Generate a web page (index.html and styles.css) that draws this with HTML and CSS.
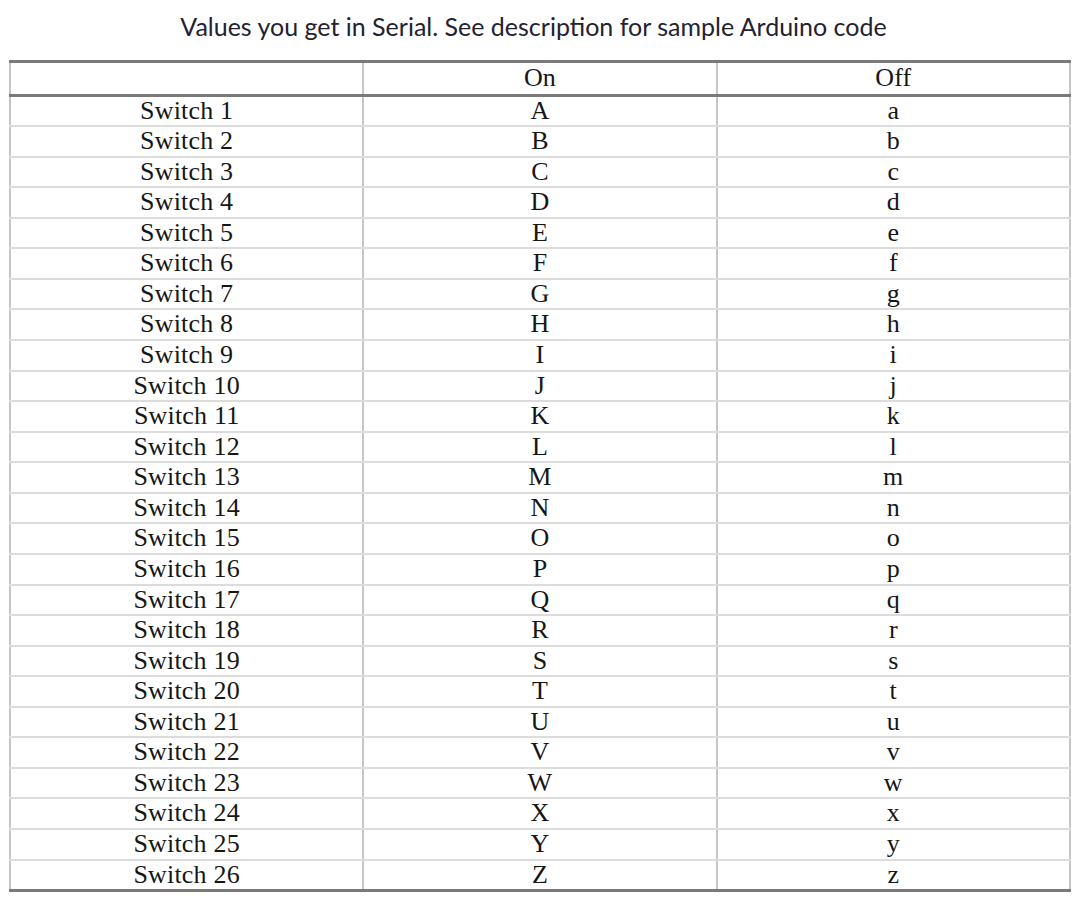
FILE: index.html
```html
<!DOCTYPE html>
<html>
<head>
<meta charset="utf-8">
<link rel="stylesheet" href="styles.css">
</head>
<body>
<div class="page">
  <div class="caption">Values you get in Serial. See description for sample Arduino code</div>
  <table class="grid">
    <thead>
      <tr><th></th><th>On</th><th>Off</th></tr>
    </thead>
    <tbody>
      <tr><td>Switch 1</td><td>A</td><td>a</td></tr>
      <tr><td>Switch 2</td><td>B</td><td>b</td></tr>
      <tr><td>Switch 3</td><td>C</td><td>c</td></tr>
      <tr><td>Switch 4</td><td>D</td><td>d</td></tr>
      <tr><td>Switch 5</td><td>E</td><td>e</td></tr>
      <tr><td>Switch 6</td><td>F</td><td>f</td></tr>
      <tr><td>Switch 7</td><td>G</td><td>g</td></tr>
      <tr><td>Switch 8</td><td>H</td><td>h</td></tr>
      <tr><td>Switch 9</td><td>I</td><td>i</td></tr>
      <tr><td>Switch 10</td><td>J</td><td>j</td></tr>
      <tr><td>Switch 11</td><td>K</td><td>k</td></tr>
      <tr><td>Switch 12</td><td>L</td><td>l</td></tr>
      <tr><td>Switch 13</td><td>M</td><td>m</td></tr>
      <tr><td>Switch 14</td><td>N</td><td>n</td></tr>
      <tr><td>Switch 15</td><td>O</td><td>o</td></tr>
      <tr><td>Switch 16</td><td>P</td><td>p</td></tr>
      <tr><td>Switch 17</td><td>Q</td><td>q</td></tr>
      <tr><td>Switch 18</td><td>R</td><td>r</td></tr>
      <tr><td>Switch 19</td><td>S</td><td>s</td></tr>
      <tr><td>Switch 20</td><td>T</td><td>t</td></tr>
      <tr><td>Switch 21</td><td>U</td><td>u</td></tr>
      <tr><td>Switch 22</td><td>V</td><td>v</td></tr>
      <tr><td>Switch 23</td><td>W</td><td>w</td></tr>
      <tr><td>Switch 24</td><td>X</td><td>x</td></tr>
      <tr><td>Switch 25</td><td>Y</td><td>y</td></tr>
      <tr><td>Switch 26</td><td>Z</td><td>z</td></tr>
    </tbody>
  </table>
</div>
</body>
</html>
```
FILE: styles.css
```css
html, body {
  margin: 0;
  padding: 0;
  background: #ffffff;
}

.page {
  padding: 8px 12px 0 9px;
  color: #222;
}

.caption {
  font-family: Lato, "Open Sans", sans-serif;
  font-size: 25px;
  line-height: 36px;
  text-align: center;
  padding-right: 14px;
  color: #222233;
  height: 52px;
}

.grid {
  width: 1062px;
  border-collapse: collapse;
  table-layout: fixed;
  font-family: "Liberation Serif", "Times New Roman", serif;
  font-size: 26px;
  letter-spacing: 0.2px;
  color: #161616;
}

.grid th,
.grid td {
  padding: 0;
  text-align: center;
  font-weight: normal;
  border-left: 2px solid #c6c6c6;
  border-right: 2px solid #c6c6c6;
  line-height: 24px;
  vertical-align: top;
}

.grid th {
  border-top: 3px solid #7a7a7a;
  border-bottom: 3px solid #7a7a7a;
  height: 34px;
  padding-top: 3px;
  box-sizing: border-box;
}

.grid td {
  border-bottom: 2px solid #dcdcdc;
  height: 30.57px;
  padding-top: 2px;
  box-sizing: border-box;
}

.grid tbody tr:last-child td {
  border-bottom: 3px solid #7a7a7a;
}
```
